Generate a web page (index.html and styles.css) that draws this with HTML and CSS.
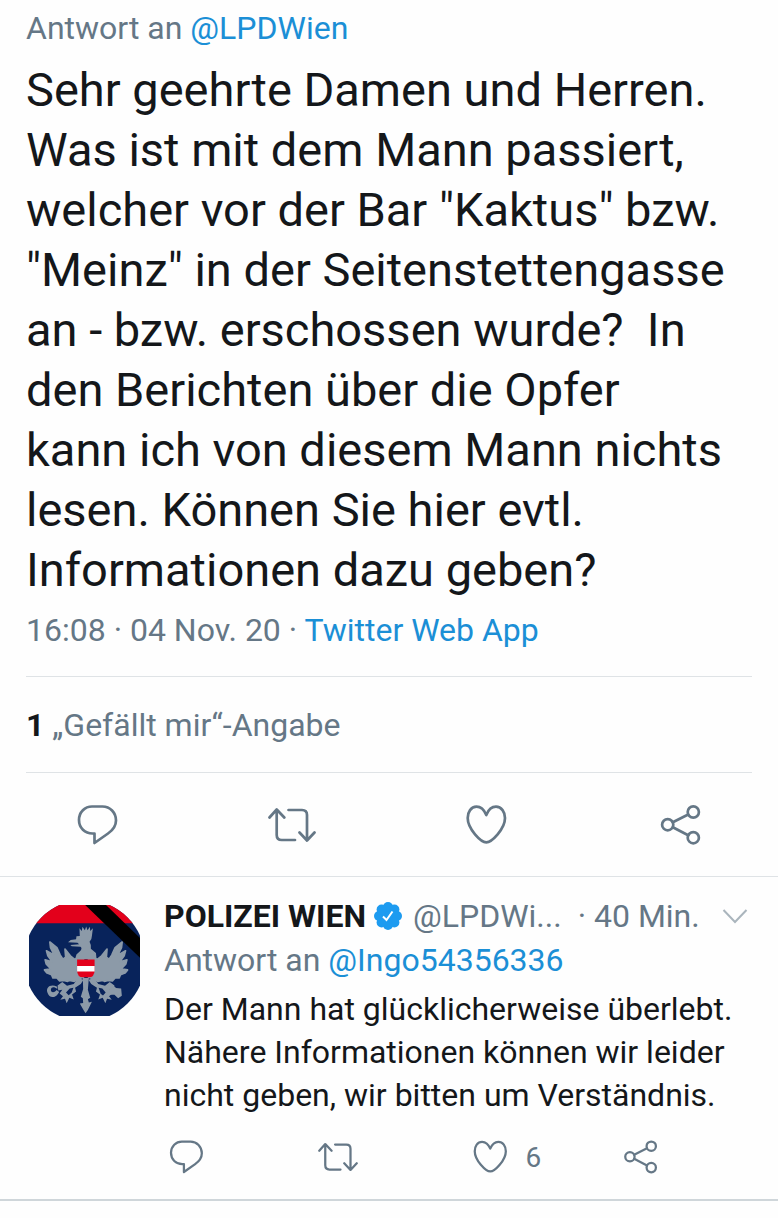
FILE: index.html
```html
<!DOCTYPE html>
<html lang="de">
<head>
<meta charset="utf-8">
<meta name="viewport" content="width=device-width, initial-scale=1">
<title>Tweet</title>
<link rel="stylesheet" href="styles.css">
</head>
<body>
<svg class="sprite" aria-hidden="true">
  <symbol id="comment" viewBox="0 0 48 48"><path d="M19 5.500H29.500C37 5.500 43 11.500 43 19.500C43 25 40 29 35 32.500L21.500 42V32.500H19.500C12 32.500 6 27 6 19S12 5.500 19 5.500Z"/></symbol>
  <symbol id="retweet" viewBox="0 0 48 48"><path d="M1.500 16.500L8.700 8.500L16.300 16.500M8.700 9V34Q8.700 39 13.700 39H27M20.500 9H34Q39 9 39 14V39M31.500 31.500L39 39.500L46.500 31.500"/></symbol>
  <symbol id="heart" viewBox="0 0 48 48"><path d="M24.300 14C22 8.500 18.500 5.700 14.500 5.700C9 5.700 5.700 11 5.700 17C5.700 28 19 41.300 24.300 41.300S43 28 43 17C43 11 39.500 5.700 34 5.700C30 5.700 26.500 8.500 24.300 14Z"/></symbol>
  <symbol id="share" viewBox="0 0 48 48"><circle cx="10.700" cy="23.700" r="5.600"/><circle cx="36.300" cy="11" r="5.600"/><circle cx="36.300" cy="36.700" r="5.600"/><path d="M15.800 21.200L31.200 13.500M15.800 26.200L31.200 34.200"/></symbol>
</svg>
<main class="thread">
  <article class="tweet">
    <p class="meta">Antwort an <a class="link" href="#">@LPDWien</a></p>
    <p class="tweet-text">Sehr geehrte Damen und Herren.<br>Was ist mit dem Mann passiert,<br>welcher vor der Bar "Kaktus" bzw.<br>"Meinz" in der Seitenstettengasse<br>an - bzw. erschossen wurde?&nbsp; In<br>den Berichten über die Opfer<br>kann ich von diesem Mann nichts<br>lesen. Können Sie hier evtl.<br>Informationen dazu geben?</p>
    <p class="meta">16:08 · 04 Nov. 20 · <a class="link" href="#">Twitter Web App</a></p>
    <p class="meta likes"><strong class="count">1</strong> „Gefällt mir“-Angabe</p>
  </article>
  <div class="actions">
    <button class="action" type="button" aria-label="Antworten"><svg class="icon"><use href="#comment"/></svg></button>
    <button class="action" type="button" aria-label="Retweeten"><svg class="icon"><use href="#retweet"/></svg></button>
    <button class="action" type="button" aria-label="Gefällt mir"><svg class="icon"><use href="#heart"/></svg></button>
    <button class="action" type="button" aria-label="Teilen"><svg class="icon"><use href="#share"/></svg></button>
  </div>
  <article class="reply">
    <svg class="avatar" viewBox="0 0 330 330" role="img" aria-label="Polizei Wien">
      <defs>
        <clipPath id="disc"><circle cx="165" cy="165" r="181"/></clipPath>
        <g id="wing">
          <path stroke="#8c9aa8" stroke-width="5" stroke-linejoin="round" d="M189 248L176 252L162 260L148 257L142 260L130 257L118 259L110 250L98 250L94 240L79 234L73 226L92 223L78 208L75 196L96 202L83 184L79 169L102 182L91 160L89 143L110 160L120 182L128 194L136 188L134 164L150 184L162 194L189 190Z"/>
          <path d="M173 250L160 268L140 273L126 262L112 272L114 287L126 285L118 296L128 304L120 315L134 312L139 325L147 309L160 314L155 299L167 290L164 279L181 268L189 255Z"/>
        </g>
      </defs>
      <g clip-path="url(#disc)">
        <path fill="#08235b" d="M0 0H330V330H0Z"/>
        <path fill="#e3001b" d="M0 0H330V54H0Z"/>
        <g fill="#8c9aa8" transform="translate(-27 -33)">
          <use href="#wing"/>
          <use href="#wing" transform="translate(393 0) scale(-1 1)"/>
          <path d="M178 125L177 102L184 110L186 98L193 108L197 97L201 108L208 98L209 110L217 102L214 125Q214 136 207 142Q213 152 211 163L226 176L228 194H164L168 180L180 169Q186 161 180 157L154 156L150 152L176 150L171 145L143 144L151 137L167 135L168 126Z"/>
          <path d="M187 250H205L202 285L209 309L202 313L205 323L214 321L202 345L195 355L189 345L178 326L188 324L187 310L181 306L188 283Z"/>
          <path d="M111 276C90 266 76 279 82 294C86 307 99 311 110 301L117 292L109 286C100 297 91 292 92 284C94 275 103 276 111 283Z"/>
          <path d="M267 282L278 273L286 280L301 281L303 303L292 310L281 300L269 300Z"/>
          <path d="M148 281L159 279L154 293L145 301L137 293ZM245 281L234 279L240 297L247 302L255 293Z" fill="#08235b"/>
        </g>
        <path fill="#e3001b" d="M143 162H195V193Q195 215 177 215H161Q143 215 143 193Z"/>
        <path fill="#fff" d="M143 181H195V198H143Z"/>
        <path fill="#000" d="M167 0H229L330 98V157Z"/>
      </g>
    </svg>
    <div class="reply-body">
      <header class="reply-head">
        <strong class="name">POLIZEI WIEN</strong>
        <svg class="badge" viewBox="0 0 28 28" role="img" aria-label="Verifiziert"><g fill="#1d9bf0"><circle cx="14" cy="14" r="11"/><circle cx="14" cy="5" r="5"/><circle cx="20.400" cy="7.600" r="5"/><circle cx="23" cy="14" r="5"/><circle cx="20.400" cy="20.400" r="5"/><circle cx="14" cy="23" r="5"/><circle cx="7.600" cy="20.400" r="5"/><circle cx="5" cy="14" r="5"/><circle cx="7.600" cy="7.600" r="5"/></g><path fill="none" stroke="#fff" stroke-width="2" d="M9 14.500L12.500 18L18.500 9.500"/></svg>
        <span class="handle">@LPDWi...</span>
        <span class="time">· 40 Min.</span>
        <button class="more" type="button" aria-label="Mehr"><svg class="chevron" viewBox="0 0 26 16"><path d="M1.500 2L13 14L24.500 2"/></svg></button>
      </header>
      <p class="meta">Antwort an <a class="link" href="#">@Ingo54356336</a></p>
      <p class="reply-text">Der Mann hat glücklicherweise überlebt.<br>Nähere Informationen können wir leider<br>nicht geben, wir bitten um Verständnis.</p>
      <div class="reply-actions">
        <button class="action" type="button" aria-label="Antworten"><svg class="icon"><use href="#comment"/></svg></button>
        <button class="action" type="button" aria-label="Retweeten"><svg class="icon"><use href="#retweet"/></svg></button>
        <button class="action" type="button" aria-label="Gefällt mir, 6"><svg class="icon"><use href="#heart"/></svg><span>6</span></button>
        <button class="action" type="button" aria-label="Teilen"><svg class="icon"><use href="#share"/></svg></button>
      </div>
    </div>
  </article>
</main>
</body>
</html>
```
FILE: styles.css
```css
* { box-sizing: border-box; }
body { margin: 0; background: #fefefe; color: #14171a; font-family: Roboto, "Liberation Sans", sans-serif; }
p { margin: 0; }
button { padding: 0; border: 0; background: none; color: inherit; font: inherit; }
.sprite { display: none; }
.tweet { padding: 8px 26px 0; }
.meta { color: #657786; font-size: 32px; line-height: 40px; white-space: nowrap; }
.link { color: #1b8fd6; text-decoration: none; }
.tweet-text { padding: 12px 0 10px; font-size: 47px; line-height: 60px; white-space: nowrap; }
.likes { margin-top: 26px; padding: 28px 0 27px; border: solid #dfe3e6; border-width: 1px 0; }
.count { color: #14171a; }
.actions { display: grid; grid-template-columns: repeat(4, 1fr); height: 103px; color: #657786; }
.action { display: flex; align-items: center; justify-content: center; }
.icon { width: 48px; height: 48px; fill: none; stroke: currentColor; stroke-width: 2.7px; stroke-linecap: round; stroke-linejoin: round; }
.reply { display: flex; gap: 24px; padding: 18px 5px 22px 29px; border: solid #dfe3e6; border-width: 1px 0 0; border-bottom: 2px solid #cfd6da; }
.avatar { flex: none; width: 111px; height: 111px; margin-top: 10px; }
.reply-body { flex: 1; min-width: 0; }
.reply-head { display: flex; align-items: center; height: 42px; padding-right: 25px; font-size: 32px; line-height: 40px; white-space: nowrap; color: #657786; }
.name { color: #14171a; }
.badge { flex: none; width: 28px; height: 28px; margin: 0 11px 0 8px; }
.time { margin-left: 16px; }
.more { display: flex; margin-left: auto; }
.chevron { width: 26px; height: 16px; fill: none; stroke: #aab5bd; stroke-width: 2px; }
.reply-head + .meta { line-height: 46px; }
.reply-text { padding-top: 5px; font-size: 32px; line-height: 43px; white-space: nowrap; }
.reply-actions { display: grid; grid-template-columns: repeat(4, 1fr); margin-top: 20px; padding-left: 2px; color: #657786; font-size: 28px; }
.reply-actions .action { justify-content: flex-start; gap: 16px; }
.reply-actions .icon { width: 40px; height: 40px; }
```
